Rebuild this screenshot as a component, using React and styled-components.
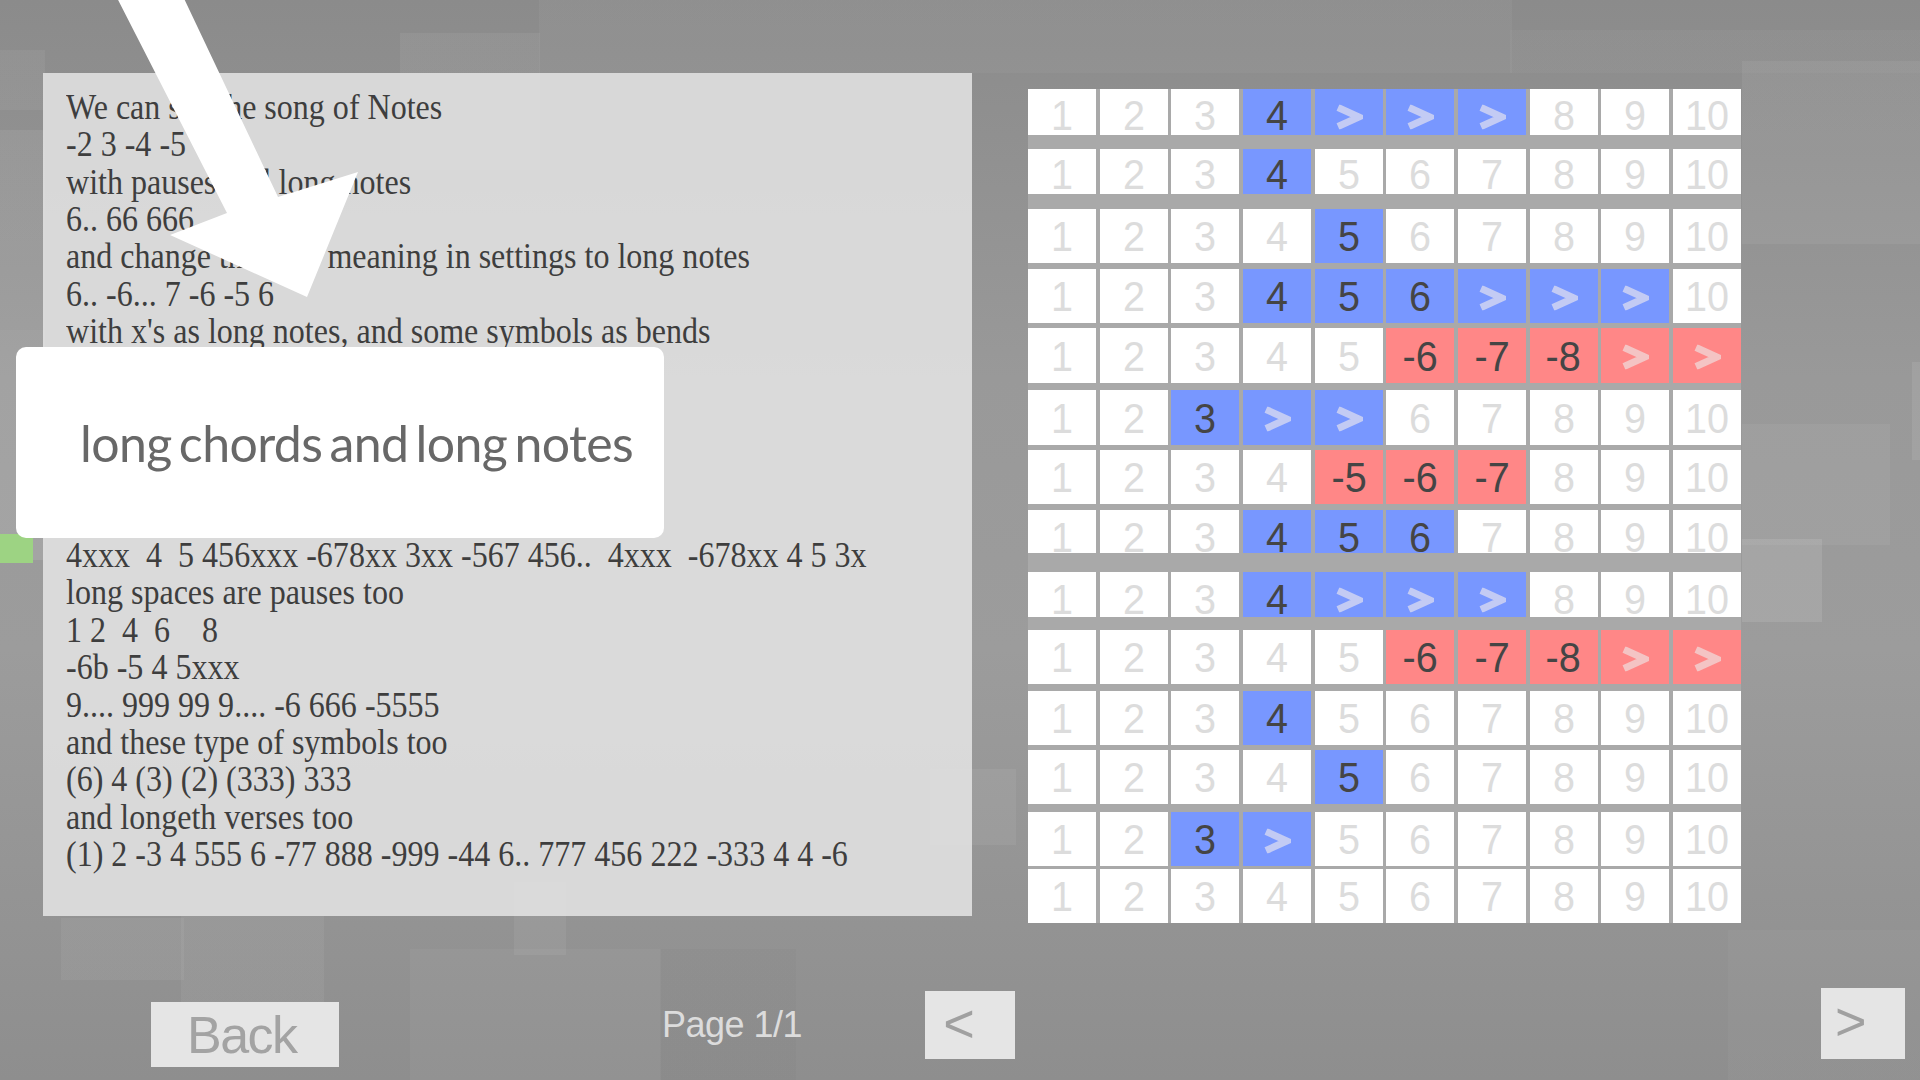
import React from 'react';
import styled, { createGlobalStyle } from 'styled-components';

const GlobalStyle = createGlobalStyle`
  html, body {
    margin: 0;
    padding: 0;
    width: 1920px;
    height: 1080px;
    overflow: hidden;
  }
  body {
    font-family: "Liberation Sans", Arial, sans-serif;
    background: #8f8f8f;
  }
  * { box-sizing: border-box; }
`;

const sq = (x1, y1, x2, y2, a) =>
  `linear-gradient(rgba(255,255,255,${a}), rgba(255,255,255,${a})) ${x1}px ${y1}px / ${x2 - x1}px ${y2 - y1}px no-repeat`;
const dk = (x1, y1, x2, y2, a) =>
  `linear-gradient(rgba(0,0,0,${a}), rgba(0,0,0,${a})) ${x1}px ${y1}px / ${x2 - x1}px ${y2 - y1}px no-repeat`;

const BG = [
  sq(0, 50, 45, 110, 0.05),
  sq(0, 130, 45, 330, 0.07),
  sq(0, 330, 45, 560, 0.09),
  sq(400, 33, 540, 170, 0.06),
  sq(539, 0, 1512, 73, 0.04),
  sq(1510, 30, 1920, 73, 0.03),
  sq(1742, 61, 1920, 244, 0.06),
  sq(1742, 424, 1890, 545, 0.05),
  sq(1742, 539, 1822, 622, 0.1),
  sq(1912, 362, 1920, 460, 0.08),
  sq(930, 769, 1016, 845, 0.06),
  sq(61, 918, 184, 980, 0.05),
  sq(181, 916, 324, 1002, 0.05),
  sq(410, 949, 661, 1080, 0.04),
  sq(514, 882, 566, 955, 0.06),
  dk(660, 949, 796, 1080, 0.02),
  sq(1728, 930, 1920, 1080, 0.03),
  'linear-gradient(180deg, #8b8b8b 0%, #999999 35%, #9c9c9c 60%, #8e8e8e 100%)',
].join(', ');

const Screen = styled.div`
  position: relative;
  width: 1920px;
  height: 1080px;
  overflow: hidden;
  display: flex;
  flex-direction: column;
  background: ${BG};
`;

const Main = styled.div`
  display: flex;
  align-items: flex-start;
  padding: 73px 0 0 43px;
  gap: 56px;
`;

const TextPanel = styled.div`
  width: 929px;
  height: 843px;
  padding: 16px 0 0 23px;
  background: rgba(230, 230, 230, 0.84);
  overflow: hidden;
`;

const TextBody = styled.div`
  font-family: "Liberation Serif", "Times New Roman", serif;
  font-size: 35px;
  line-height: 37.35px;
  color: #3e3e3e;
  transform: scaleX(0.915);
  transform-origin: left top;
  width: 1000px;
`;

const TextLine = styled.div`
  white-space: pre;
  height: 37.35px;
`;

const Grid = styled.div`
  margin-top: 16px;
  width: 713px;
  display: flex;
  flex-direction: column;
  background: #a9a9a9;
`;

const Row = styled.div`
  display: grid;
  grid-template-columns: repeat(10, 68px);
  column-gap: 3.67px;
  height: ${(p) => p.$h}px;
  margin-top: ${(p) => p.$mt}px;
`;

const cellBg = { n: '#ffffff', b: '#7897ff', r: '#ff8787' };

const Cell = styled.div`
  background: ${(p) => cellBg[p.$kind]};
  display: flex;
  align-items: center;
  justify-content: center;
  overflow: ${(p) => (p.$clip ? 'hidden' : 'visible')};
`;

const Digit = styled.span`
  display: block;
  font-family: "Liberation Sans", Arial, sans-serif;
  font-size: 43px;
  line-height: 36px;
  color: ${(p) => (p.$active ? '#454545' : '#dcdcdc')};
  transform: translateY(${(p) => p.$dy}px) scaleX(0.92);
`;

const Chevron = styled.svg`
  display: block;
  width: 28px;
  height: 25px;
  transform: translateY(${(p) => p.$dy + 1.5}px);
`;

const Bottom = styled.div`
  display: flex;
  align-items: flex-start;
  margin-top: 65px;
`;

const BackButton = styled.div`
  margin-left: 151px;
  margin-top: 14px;
  width: 188px;
  height: 65px;
  padding-left: 36px;
  display: flex;
  align-items: center;
  background: #e5e5e5;
  color: #a3a3a3;
  font-size: 52px;
  letter-spacing: -1.5px;
`;

const PageLabel = styled.div`
  margin-left: 323px;
  margin-top: 17px;
  font-size: 36px;
  line-height: 40px;
  letter-spacing: -0.5px;
  color: #dcdcdc;
`;

const NavButton = styled.div`
  margin-left: ${(p) => (p.$right ? 'auto' : '123px')};
  margin-right: ${(p) => (p.$right ? '15px' : '0')};
  margin-top: ${(p) => (p.$right ? 0 : 3)}px;
  width: ${(p) => (p.$right ? 84 : 90)}px;
  height: ${(p) => (p.$right ? 71 : 68)}px;
  padding-left: ${(p) => (p.$right ? 14 : 18)}px;
  padding-bottom: 5px;
  display: flex;
  align-items: center;
  background: #e5e5e5;
  color: #a0a0a0;
  font-size: 54px;
  line-height: 1;
`;

const ArrowOverlay = styled.svg`
  position: absolute;
  left: 0;
  top: 0;
  width: 400px;
  height: 320px;
`;

const GreenTab = styled.div`
  position: absolute;
  left: 0;
  top: 534px;
  width: 33px;
  height: 29px;
  background: #9dd383;
`;

const Callout = styled.div`
  position: absolute;
  left: 16px;
  top: 347px;
  width: 648px;
  height: 191px;
  border-radius: 10px;
  background: #ffffff;
  display: flex;
  align-items: center;
  padding-left: 64px;
  font-family: Lato, "Open Sans", sans-serif;
  font-size: 50px;
  color: #686868;
  letter-spacing: -0.6px;
  word-spacing: -5px;
`;

const lines = [
  'We can see the song of Notes',
  '-2 3 -4 -5',
  'with pauses and long notes',
  '6.. 66 666',
  "and change the dots meaning in settings to long notes",
  '6.. -6... 7 -6 -5 6',
  "with x's as long notes, and some symbols as bends",
  '\u00a0',
  '\u00a0',
  '\u00a0',
  '\u00a0',
  '\u00a0',
  '4xxx  4  5 456xxx -678xx 3xx -567 456..  4xxx  -678xx 4 5 3x',
  'long spaces are pauses too',
  '1 2  4  6    8',
  '-6b -5 4 5xxx',
  '9.... 999 99 9.... -6 666 -5555',
  'and these type of symbols too',
  '(6) 4 (3) (2) (333) 333',
  'and longeth verses too',
  '(1) 2 -3 4 555 6 -77 888 -999 -44 6.. 777 456 222 -333 4 4 -6',
];

const B = (v) => ['b', v];
const R = (v) => ['r', v];
const N = (v) => ['n', v];
const plain = (i) => N(String(i + 1));

const buildRow = (overrides) =>
  Array.from({ length: 10 }, (_, i) => (overrides[i] ? overrides[i] : plain(i)));

const rows = [
  { h: 46, mt: 0, dy: 3, cells: buildRow({ 3: B('4'), 4: B('>'), 5: B('>'), 6: B('>') }) },
  { h: 45, mt: 14, dy: 2, cells: buildRow({ 3: B('4') }) },
  { h: 54, mt: 15, dy: 0, cells: buildRow({ 4: B('5') }) },
  { h: 54, mt: 6, dy: 0, cells: buildRow({ 3: B('4'), 4: B('5'), 5: B('6'), 6: B('>'), 7: B('>'), 8: B('>') }) },
  { h: 55, mt: 5, dy: 0, cells: buildRow({ 5: R('-6'), 6: R('-7'), 7: R('-8'), 8: R('>'), 9: R('>') }) },
  { h: 55, mt: 7, dy: 0, cells: buildRow({ 2: B('3'), 3: B('>'), 4: B('>') }) },
  { h: 54, mt: 5, dy: 0, cells: buildRow({ 4: R('-5'), 5: R('-6'), 6: R('-7') }) },
  { h: 43, mt: 6, dy: 5, clip: true, cells: buildRow({ 3: B('4'), 4: B('5'), 5: B('6') }) },
  { h: 45, mt: 19, dy: 4, cells: buildRow({ 3: B('4'), 4: B('>'), 5: B('>'), 6: B('>') }) },
  { h: 54, mt: 13, dy: 0, cells: buildRow({ 5: R('-6'), 6: R('-7'), 7: R('-8'), 8: R('>'), 9: R('>') }) },
  { h: 54, mt: 7, dy: 0, cells: buildRow({ 3: B('4') }) },
  { h: 54, mt: 5, dy: 0, cells: buildRow({ 4: B('5') }) },
  { h: 54, mt: 8, dy: 0, cells: buildRow({ 2: B('3'), 3: B('>') }) },
  { h: 54, mt: 3, dy: 0, cells: buildRow({}) },
];

const chevronColor = { b: '#c3cbf4', r: '#f4c4c4', n: '#dddddd' };

function NoteCell({ kind, label, dy, clip }) {
  return (
    <Cell $kind={kind} $clip={clip}>
      {label === '>' ? (
        <Chevron viewBox="0 0 28 25" $dy={dy}>
          <polyline
            points="3,3 24,12.5 3,22"
            fill="none"
            stroke={chevronColor[kind]}
            strokeWidth="7"
            strokeLinejoin="miter"
          />
        </Chevron>
      ) : (
        <Digit $active={kind !== 'n'} $dy={dy}>
          {label}
        </Digit>
      )}
    </Cell>
  );
}

export default function App() {
  return (
    <>
      <GlobalStyle />
      <Screen>
        <Main>
          <TextPanel>
            <TextBody>
              {lines.map((l, i) => (
                <TextLine key={i}>{l}</TextLine>
              ))}
            </TextBody>
          </TextPanel>
          <Grid>
            {rows.map((r, ri) => (
              <Row key={ri} $h={r.h} $mt={r.mt}>
                {r.cells.map(([kind, label], ci) => (
                  <NoteCell key={ci} kind={kind} label={label} dy={r.dy} clip={r.clip} />
                ))}
              </Row>
            ))}
          </Grid>
        </Main>
        <Bottom>
          <BackButton>Back</BackButton>
          <PageLabel>Page 1/1</PageLabel>
          <NavButton>&lt;</NavButton>
          <NavButton $right>&gt;</NavButton>
        </Bottom>

        <GreenTab />
        <Callout>long chords and long notes</Callout>
        <ArrowOverlay viewBox="0 0 400 320">
          <polygon
            points="113,-10 180,-10 278,197 358,172 307,297 170,235 227,213"
            fill="#ffffff"
          />
        </ArrowOverlay>
      </Screen>
    </>
  );
}
